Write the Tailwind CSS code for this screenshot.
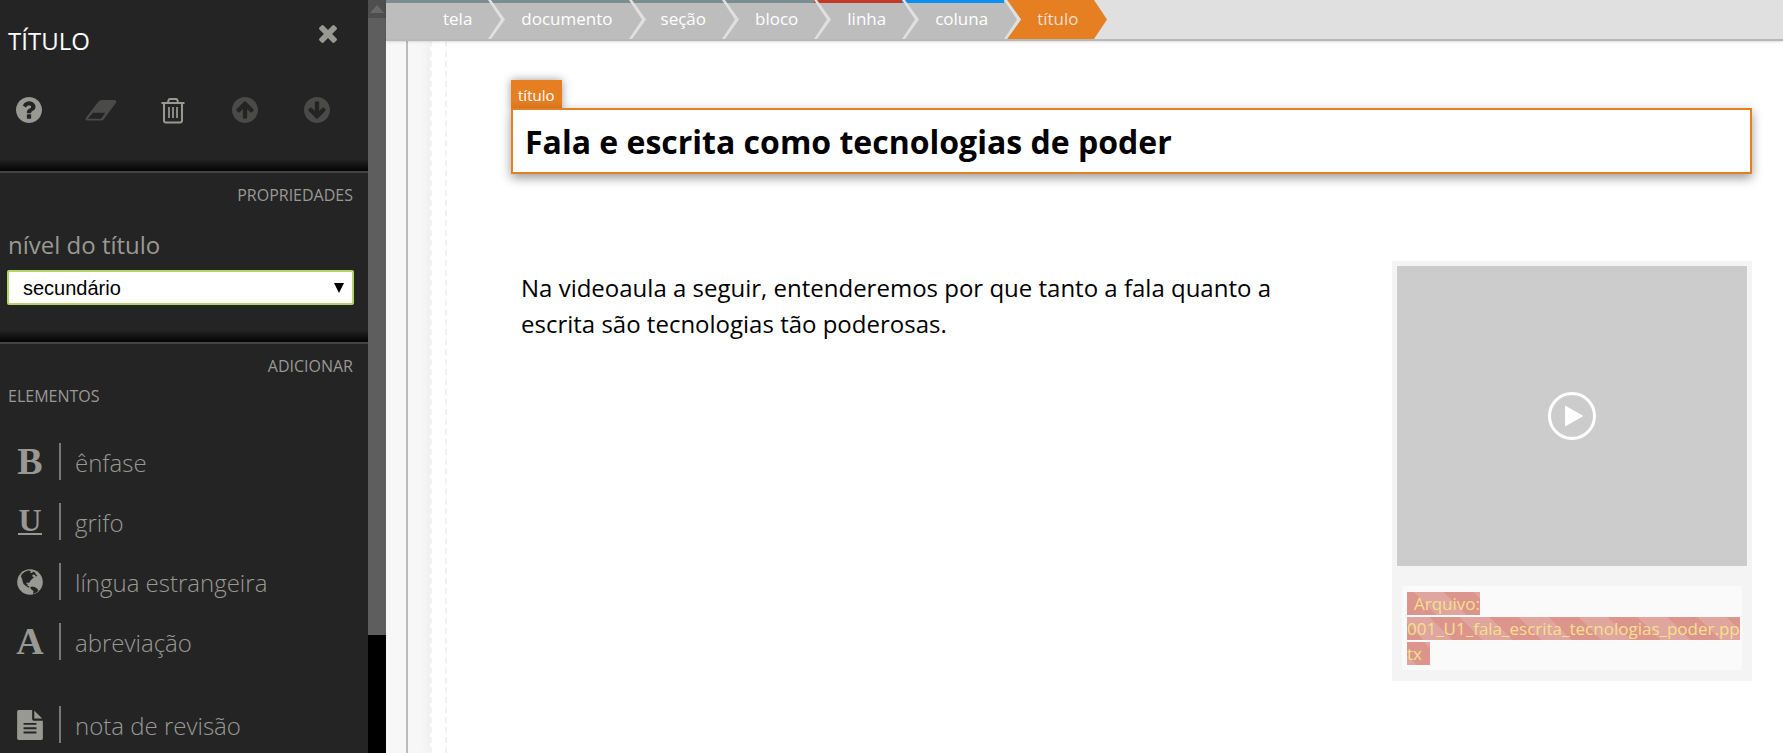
<!DOCTYPE html>
<html lang="pt-BR">
<head>
<meta charset="utf-8">
<title>Editor</title>
<script src="https://cdn.jsdelivr.net/npm/@tailwindcss/browser@4"></script>
</head>
<body class="bg-white font-['Open_Sans',sans-serif]">
<svg class="hidden" aria-hidden="true">
  <defs>
    <symbol id="sep" viewBox="0 0 17 39"><path d="M0 0h3l14 19.500L3 39H0l13-19.500z" fill="#e0e0e0"/></symbol>
  </defs>
</svg>
<div class="flex h-screen overflow-hidden">

  <aside class="flex w-[386px] shrink-0 overflow-hidden bg-[#242424] text-[#999994]">
    <div class="min-w-0 flex-1">
      <header class="flex h-[171px] flex-col bg-linear-to-t from-[#050505] via-[#242424] via-[12px] to-[#242424]">
        <div class="flex items-start justify-between pt-5 pr-[31px] pl-2">
          <h1 class="pt-1 text-2xl leading-[34px] text-white">TÍTULO</h1>
          <button class="mt-[3px] h-6 w-[18px]" aria-label="fechar">
            <svg class="h-6 w-[18px]" viewBox="300 300 1192 1454" fill="currentColor"><path d="M1490 1322q0 40-28 68l-136 136q-28 28-68 28t-68-28l-294-294-294 294q-28 28-68 28t-68-28l-136-136q-28-28-28-68t28-68l294-294-294-294q-28-28-28-68t28-68l136-136q28-28 68-28t68 28l294 294 294-294q28-28 68-28t68 28l136 136q28 28 28 68t-28 68l-294 294 294 294q28 28 28 68z"/></svg>
          </button>
        </div>
        <div class="flex gap-10 pt-9 pl-[13px]">
          <button aria-label="ajuda"><svg class="size-8 p-[3px]" viewBox="128 128 1536 1536" fill="currentColor"><path d="M1024 1376v-192q0-14-9-23t-23-9h-192q-14 0-23 9t-9 23v192q0 14 9 23t23 9h192q14 0 23-9t9-23zm256-672q0-88-55.500-163t-138.500-116-170-41q-243 0-371 213-15 24 8 42l132 100q7 6 19 6 16 0 25-12 53-68 86-92 34-24 86-24 48 0 85.500 26t37.500 59q0 38-20 61t-68 45q-63 28-115.500 86.500t-52.500 125.500v36q0 14 9 23t23 9h192q14 0 23-9t9-23q0-19 21.500-49.500t54.500-49.500q32-18 49-28.500t46-35 44.500-48 28-60.500 12.500-81zm384 192q0 209-103 385.500t-279.500 279.500-385.500 103-385.500-103-279.500-279.500-103-385.500 103-385.500 279.500-279.500 385.500-103 385.500 103 279.500 279.500 103 385.500z"/></svg></button>
          <button aria-label="limpar" class="text-[#4a4a48]"><svg class="size-8" viewBox="0 0 32 32"><path d="M16.500 6h13.500q2 .5 1.200 2.500L19 25q-1 1.500-2.500 1.500H2q-2-.3-1.300-2.500L13.500 7.500Q15 6 16.500 6z" fill="currentColor"/><path d="M8 18.800h12.300L16 24.800H2.800z" fill="#242424"/></svg></button>
          <button aria-label="excluir"><svg class="size-8" viewBox="0 0 32 32" fill="none" stroke="currentColor" stroke-width="2"><path d="M4.500 9h23M7 9v17.500q0 2 2 2h14q2 0 2-2V9M11 8.500q.5-3.500 2-3.500h6q1.500 0 2 3.500"/><path d="M12 13v11M16 13v11M20 13v11" stroke-width="1.700"/></svg></button>
          <button aria-label="subir" class="text-[#4a4a48]"><svg class="size-8 p-[3px]" viewBox="128 128 1536 1536" fill="currentColor"><path d="M1412 895q0-27-18-45l-362-362-91-91q-18-18-45-18t-45 18l-91 91-362 362q-18 18-18 45t18 45l91 91q18 18 45 18t45-18l189-189v502q0 26 19 45t45 19h128q26 0 45-19t19-45v-502l189 189q19 19 45 19t45-19l91-91q18-18 18-45zm252 1q0 209-103 385.500t-279.500 279.500-385.500 103-385.500-103-279.500-279.500-103-385.500 103-385.500 279.500-279.500 385.500-103 385.500 103 279.500 279.500 103 385.500z"/></svg></button>
          <button aria-label="descer" class="text-[#4a4a48]"><svg class="size-8 rotate-180 p-[3px]" viewBox="128 128 1536 1536" fill="currentColor"><path d="M1412 895q0-27-18-45l-362-362-91-91q-18-18-45-18t-45 18l-91 91-362 362q-18 18-18 45t18 45l91 91q18 18 45 18t45-18l189-189v502q0 26 19 45t45 19h128q26 0 45-19t19-45v-502l189 189q19 19 45 19t45-19l91-91q18-18 18-45zm252 1q0 209-103 385.500t-279.500 279.500-385.500 103-385.500-103-279.500-279.500-103-385.500 103-385.500 279.500-279.500 385.500-103 385.500 103 279.500 279.500 103 385.500z"/></svg></button>
        </div>
      </header>

      <section class="h-[171px] border-t-2 border-[#444] bg-linear-to-t from-[#050505] via-[#242424] via-[12px] to-[#242424] pr-[14px] pl-[7px]">
        <h2 class="pt-[7px] pr-px text-right text-base leading-[30px]">PROPRIEDADES</h2>
        <label for="nivel" class="mt-3.5 block pl-px text-2xl leading-[42px]">nível do título</label>
        <div class="relative mt-1">
          <select id="nivel" class="block h-[35px] w-full appearance-none rounded-xs border-2 border-[#b5d56a] bg-white px-3.5 font-['Liberation_Sans',sans-serif] text-xl leading-[30px] text-black">
            <option>secundário</option>
            <option>primário</option>
          </select>
          <svg class="pointer-events-none absolute top-[13px] right-2.5 h-[10px] w-[10px]" viewBox="0 0 10 10"><path d="M0 0h10L5 10z"/></svg>
        </div>
      </section>

      <section class="border-t-2 border-[#444] px-2">
        <h2 class="pt-[7px] pr-[7px] text-base leading-[30px]"><span class="block text-right">ADICIONAR</span>ELEMENTOS</h2>
        <ul class="mt-8 flex flex-col gap-[23px] text-2xl font-light">
          <li><button class="flex h-[37px] items-center"><span class="grid w-11 place-items-center font-['Liberation_Serif',serif] text-[38px] leading-[37px] font-bold">B</span><span class="ml-[7px] flex h-[37px] items-center border-l-2 border-[#777] pt-0.5 pl-3.5">ênfase</span></button></li>
          <li><button class="flex h-[37px] items-center"><span class="grid w-11 place-items-center font-['Liberation_Serif',serif] text-[32px] font-bold"><span class="border-b-2 leading-[25px]">U</span></span><span class="ml-[7px] flex h-[37px] items-center border-l-2 border-[#777] pt-0.5 pl-3.5">grifo</span></button></li>
          <li><button class="flex h-[37px] items-center"><span class="grid w-11 place-items-center"><svg class="size-[26px]" viewBox="0 0 26 26"><circle cx="13" cy="13" r="12.800" fill="currentColor"/><path d="M4.500 5.500L7.500 3l3.500-1.500 3 .5-1 1.500 2 .5 1-1.500 2 1 1 2 1.500 1.500-2 .5-.5-1.500-2-.5-1 1.500 2 1.500-1.500 1-2 2-1.500 2.500-2-.5-1 1 1.500.5v2l2 .5-1 1.200-2.500-1.700-2.500-2L5.500 12 5 9.500 4 8zM13 18.500l2-1 2.500.5 2.500 1.500 1.500 2-2 2-3.500 1.500.5-3-2-1.500z" fill="#242424"/></svg></span><span class="ml-[7px] flex h-[37px] items-center border-l-2 border-[#777] pt-0.5 pl-3.5">língua estrangeira</span></button></li>
          <li><button class="flex h-[37px] items-center"><span class="grid w-11 place-items-center font-['Liberation_Serif',serif] text-[38px] leading-[37px] font-bold">A</span><span class="ml-[7px] flex h-[37px] items-center border-l-2 border-[#777] pt-0.5 pl-3.5">abreviação</span></button></li>
          <li class="mt-[23px]"><button class="flex h-[37px] items-center"><span class="grid w-11 place-items-center"><svg class="h-[30px] w-[26px]" viewBox="128 0 1536 1792" fill="currentColor"><path d="M1596 476q14 14 28 36h-472v-472q22 14 36 28zm-476 164h544v1056q0 40-28 68t-68 28h-1344q-40 0-68-28t-28-68v-1600q0-40 28-68t68-28h800v544q0 40 28 68t68 28z"/><path d="M512 832h768M512 1088h768M512 1344h768" stroke="#242424" stroke-width="110"/></svg></span><span class="ml-[7px] flex h-[37px] items-center border-l-2 border-[#777] pt-0.5 pl-3.5">nota de revisão</span></button></li>
        </ul>
      </section>
    </div>
    <div class="flex w-[18px] flex-col bg-black" aria-hidden="true">
      <div class="grid h-[18px] place-items-center bg-[#4e4e4e]"><svg class="h-2 w-3.5" viewBox="0 0 14 8"><path d="M7 0l7 8H0z" fill="#686868"/></svg></div>
      <div class="h-[617px] bg-[#5e5e5e]"></div>
    </div>
  </aside>

  <main class="flex min-w-0 flex-1 flex-col bg-[#f7f7f7]">
    <nav class="z-10 flex h-[41px] shrink-0 border-b-2 border-[#b8b8b8] bg-[#e0e0e0] text-[17px] leading-[32px] text-white shadow-sm" aria-label="caminho">
      <a href="#" class="border-t-3 border-[#7b8d8e] bg-[#bdbdbd] pr-4 pl-[57px]">tela</a>
      <svg class="w-[17px] bg-[#bdbdbd]" viewBox="0 0 17 39"><path d="M0 0h17v3H0z" fill="#7b8d8e"/><use href="#sep"/></svg>
      <a href="#" class="border-t-3 border-[#7b8d8e] bg-[#bdbdbd] px-4">documento</a>
      <svg class="w-[17px] bg-[#bdbdbd]" viewBox="0 0 17 39"><path d="M0 0h17v3H0z" fill="#7b8d8e"/><use href="#sep"/></svg>
      <a href="#" class="border-t-3 border-[#7b8d8e] bg-[#bdbdbd] pr-4 pl-[15px]">seção</a>
      <svg class="w-[17px] bg-[#bdbdbd]" viewBox="0 0 17 39"><path d="M0 0h17v3H0z" fill="#7b8d8e"/><use href="#sep"/></svg>
      <a href="#" class="border-t-3 border-[#7b8d8e] bg-[#bdbdbd] px-4">bloco</a>
      <svg class="w-[17px] bg-[#bdbdbd]" viewBox="0 0 17 39"><path d="M0 0h17v3H0z" fill="#c0392b"/><use href="#sep"/></svg>
      <a href="#" class="border-t-3 border-[#c0392b] bg-[#bdbdbd] px-4">linha</a>
      <svg class="w-[17px] bg-[#bdbdbd]" viewBox="0 0 17 39"><path d="M0 0h17v3H0z" fill="#0a90f0"/><use href="#sep"/></svg>
      <a href="#" class="border-t-3 border-[#0a90f0] bg-[#bdbdbd] px-4">coluna</a>
      <svg class="w-[17px] bg-[#bdbdbd]" viewBox="0 0 17 39"><path d="M3 0h14v39H3l14-19.500z" fill="#e67e22"/><use href="#sep"/></svg>
      <a href="#" class="border-t-3 border-[#e67e22] bg-[#e67e22] pr-[15px] pl-4 text-[#eadfce]">título</a>
      <svg class="w-[13px]" viewBox="0 0 13 39"><path d="M0 0l13 19.500L0 39z" fill="#e67e22"/></svg>
    </nav>

    <div class="flex min-h-0 flex-1">
      <div class="w-[22px] shrink-0 border-r-2 border-[#bbb]"></div>
      <div class="ml-[22px] flex min-w-0 flex-1 border-l-2 border-dashed border-[#f2f2f2] bg-white shadow-[0_0_12px_rgba(0,0,0,0.06)]">
        <div class="ml-[13px] min-w-0 flex-1 border-l-2 border-dashed border-[#f2f2f2] pt-[39px] pr-[31px] pl-16">
          <div class="block w-fit bg-[#e67e22] px-[7px] text-[15px] leading-[30px] text-white shadow-[0_0_10px_rgba(0,0,0,0.4)]">título</div>
          <div class="relative z-10 -mt-0.5 border-2 border-[#e67e22] bg-white px-3 shadow-[0_4px_10px_rgba(0,0,0,0.4)]">
            <h2 class="pt-0.5 text-[32px] leading-[60px] font-bold text-black">Fala e escrita como tecnologias de poder</h2>
          </div>
          <div class="mt-[87px] flex items-start gap-[90px] pl-[10px]">
            <p class="min-w-0 flex-1 pt-[9px] text-2xl leading-9 text-black">Na videoaula a seguir, entenderemos por que tanto a fala quanto a escrita são tecnologias tão poderosas.</p>
            <figure class="w-[360px] shrink-0 bg-[#f4f4f4] p-[5px] pb-[11px]">
              <button class="grid h-[300px] w-full place-items-center bg-[#ccc]" aria-label="reproduzir">
                <svg class="size-12" viewBox="0 0 48 48"><circle cx="24" cy="24" r="22.500" fill="none" stroke="#fff" stroke-width="3"/><path d="M17 13.500L35.500 24 17 34.500z" fill="#fff"/></svg>
              </button>
              <figcaption class="mx-[5px] mt-5 rounded-xs bg-[#fafafa] pt-[5px] pb-1 pl-[5px] text-[17px] leading-[25px] break-all text-[#f5e08c]"><span class="bg-[repeating-linear-gradient(45deg,#dc958d_0,#dc958d_21px,#dfa59e_21px,#dfa59e_42px)] pr-2 pl-[7px]">Arquivo:<br>001_U1_fala_escrita_tecnologias_poder.pptx</span></figcaption>
            </figure>
          </div>
        </div>
      </div>
    </div>
  </main>
</div>
</body>
</html>
